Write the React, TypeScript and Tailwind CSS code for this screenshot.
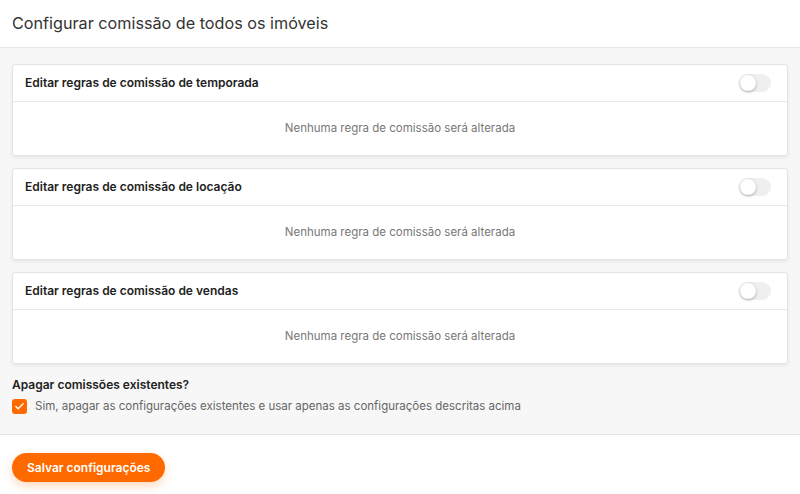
import { Check } from "lucide-react";

const sections = [
  "Editar regras de comissão de temporada",
  "Editar regras de comissão de locação",
  "Editar regras de comissão de vendas",
];

export default function App() {
  return (
    <div className="flex h-[494px] w-[800px] flex-col bg-white font-['Inter',sans-serif] text-[#333]">
      <header className="flex h-[48px] shrink-0 items-center border-b border-[#e6e6e6] px-3">
        <h1 className="text-[16.2px] text-[#333]">Configurar comissão de todos os imóveis</h1>
      </header>
      <main className="flex flex-col gap-3 border-b border-[#e2e2e2] bg-[#f7f7f7] px-3 pb-[19px] pt-[16px]">
        {sections.map((title) => (
          <Section key={title} title={title} />
        ))}
        <div className="flex flex-col gap-[4px]">
          <p className="text-[12px] font-semibold text-[#222]">Apagar comissões existentes?</p>
          <label className="flex items-center gap-[8px]">
            <span className="flex h-[15px] w-[15px] items-center justify-center rounded-[3px] bg-[#ff6a00]">
              <Check className="h-[11px] w-[11px] text-white" strokeWidth={3} />
            </span>
            <span className="text-[11.5px] text-[#666]">
              Sim, apagar as configurações existentes e usar apenas as configurações descritas acima
            </span>
          </label>
        </div>
      </main>
      <footer className="flex flex-1 items-start px-3 pt-[18px]">
        <button className="h-[29px] rounded-full bg-[#ff6a00] px-[15px] text-[12px] font-semibold text-white shadow-[0_4px_10px_rgba(255,106,0,0.25)]">
          Salvar configurações
        </button>
      </footer>
    </div>
  );
}

function Section({ title }: { title: string }) {
  return (
    <div className="rounded-[3px] border border-[#e3e3e3] bg-white shadow-[0_2px_4px_rgba(0,0,0,0.06)]">
      <div className="flex h-[37px] items-center justify-between border-b border-[#e8e8e8] pl-3 pr-4">
        <span className="text-[12px] font-semibold text-[#222]">{title}</span>
        <span className="relative h-[18px] w-[32px] rounded-full bg-[#efefef]">
          <span className="absolute left-[1px] top-[1px] h-[16px] w-[16px] rounded-full bg-white shadow-[0_1px_3px_rgba(0,0,0,0.3)]" />
        </span>
      </div>
      <div className="flex h-[53px] items-center justify-center">
        <span className="text-[11.5px] text-[#777]">Nenhuma regra de comissão será alterada</span>
      </div>
    </div>
  );
}
